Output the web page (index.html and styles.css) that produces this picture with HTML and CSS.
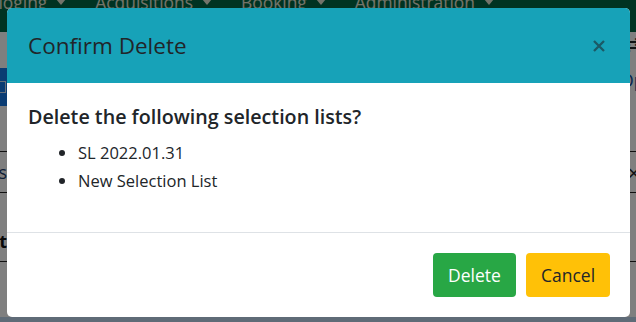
FILE: index.html
```html
<!DOCTYPE html>
<html>
<head>
    <title>Selection Lists</title>
    <meta charset="utf-8">
    <meta name="viewport" content="width=device-width, initial-scale=1">
    <link rel="stylesheet" href="styles.css">
</head>
<body>
    <nav class="topbar">
        <div class="menu">
            <span class="menu-item">Cataloging <i class="caret"></i></span>
            <span class="menu-item">Acquisitions <i class="caret"></i></span>
            <span class="menu-item">Booking <i class="caret"></i></span>
            <span class="menu-item">Administration <i class="caret"></i></span>
        </div>
    </nav>
    <div class="page">
        <div class="page-head">
            <span class="head-icon">&#8644;</span>
        </div>
        <div class="toolbar">
            <div class="btn-new"><span class="box"></span></div>
            <div class="tb-right">Open</div>
        </div>
        <div class="row row-gap"></div>
        <div class="row row-item">
            <div class="cut">Lists</div>
            <div class="row-x">&times;</div>
        </div>
        <div class="row row-head">
            <div class="cut bold">Count</div>
        </div>
        <div class="row row-empty"></div>
        <div class="page-foot"></div>
    </div>

    <div class="backdrop"></div>

    <div class="modal">
        <div class="modal-header">
            <h5 class="modal-title">Confirm Delete</h5>
            <button class="close" type="button">
                <svg width="14" height="14" viewBox="0 0 14 14">
                    <path d="M2 2 L12 12 M12 2 L2 12" stroke="currentColor" stroke-width="2.3" fill="none"/>
                </svg>
            </button>
        </div>
        <div class="modal-body">
            <h5 class="question">Delete the following selection lists?</h5>
            <ul class="names">
                <li>SL 2022.01.31</li>
                <li>New Selection List</li>
            </ul>
        </div>
        <div class="modal-footer">
            <button class="btn btn-delete" type="button">Delete</button>
            <button class="btn btn-cancel" type="button">Cancel</button>
        </div>
    </div>
</body>
</html>
```

FILE: styles.css
```css
body {
    margin: 0;
    font-family: "Open Sans", "Liberation Sans", sans-serif;
    color: #212529;
    background: #fff;
    overflow: hidden;
}

/* page behind the dialog */
.topbar {
    height: 32px;
    background: #006644;
    overflow: hidden;
}
.menu {
    display: flex;
    margin-left: -38px;
    margin-top: -10px;
    font-size: 17.4px;
    line-height: 24px;
    color: #e6e6d4;
}
.menu-item {
    display: flex;
    align-items: center;
    gap: 9px;
    margin-right: 29px;
    white-space: nowrap;
}
.caret {
    display: inline-block;
    border-left: 5px solid transparent;
    border-right: 5px solid transparent;
    border-top: 6px solid #e6e6d4;
}

.page-head {
    height: 36px;
    display: flex;
    justify-content: flex-end;
    align-items: center;
}
.head-icon {
    font-size: 18px;
    margin-right: -4px;
    margin-top: -12px;
}
.toolbar {
    height: 38px;
    display: flex;
    justify-content: space-between;
    align-items: center;
}
.btn-new {
    width: 40px;
    height: 38px;
    background: #1478e6;
    display: flex;
    align-items: center;
}
.box {
    width: 10px;
    height: 10px;
    margin-left: -6px;
    border: 1px solid #cfe0f5;
}
.tb-right {
    font-size: 18px;
    margin-right: -30px;
    margin-top: -14px;
    color: #0d4fa0;
}
.row {
    display: flex;
    justify-content: space-between;
    align-items: center;
    border-bottom: 1px solid #222;
}
.row-gap { height: 45px; }
.row-item { height: 40px; }
.row-head { height: 68px; }
.row-empty { height: 55px; border-bottom: 0; }
.cut {
    width: 7px;
    display: flex;
    justify-content: flex-end;
    overflow: hidden;
    white-space: nowrap;
    font-size: 18px;
    color: #1a3d6e;
}
.bold {
    font-weight: 700;
    color: #111;
    margin-top: 28px;
}
.row-x {
    font-size: 22px;
    margin-right: -4px;
}
.page-foot {
    height: 20px;
    background: #bed6ee;
}

.backdrop {
    position: fixed;
    inset: 0;
    background: rgba(0, 0, 0, 0.5);
}

/* dialog */
.modal {
    position: fixed;
    top: 8px;
    left: 7px;
    width: 623px;
    background: #fff;
    border-radius: 5px;
    overflow: hidden;
}
.modal-header {
    height: 75px;
    padding: 0 21px;
    background: #17a2b8;
    display: flex;
    align-items: center;
    justify-content: space-between;
}
.modal-title {
    margin: 0;
    font-size: 22.5px;
    font-weight: 500;
    line-height: 30px;
    color: #212529;
}
.close {
    border: 0;
    background: none;
    padding: 0;
    margin-right: 3px;
    margin-top: 1px;
    color: #1b5a66;
    display: flex;
}
.modal-body {
    padding: 20px 21px 37px;
}
.question {
    margin: 0 0 9px;
    font-size: 19.7px;
    font-weight: 600;
    line-height: 27px;
}
.names {
    margin: 0;
    padding-left: 50px;
    font-size: 16.5px;
    line-height: 28px;
}
.modal-footer {
    border-top: 1px solid #dee2e6;
    padding: 20px;
    display: flex;
    justify-content: flex-end;
    gap: 10px;
}
.btn {
    height: 44px;
    border: 0;
    border-radius: 4px;
    font-family: inherit;
    font-size: 17.5px;
    padding: 0;
    cursor: pointer;
}
.btn-delete {
    width: 83px;
    background: #28a745;
    color: #fff;
}
.btn-cancel {
    width: 84px;
    background: #ffc107;
    color: #212529;
}
```
